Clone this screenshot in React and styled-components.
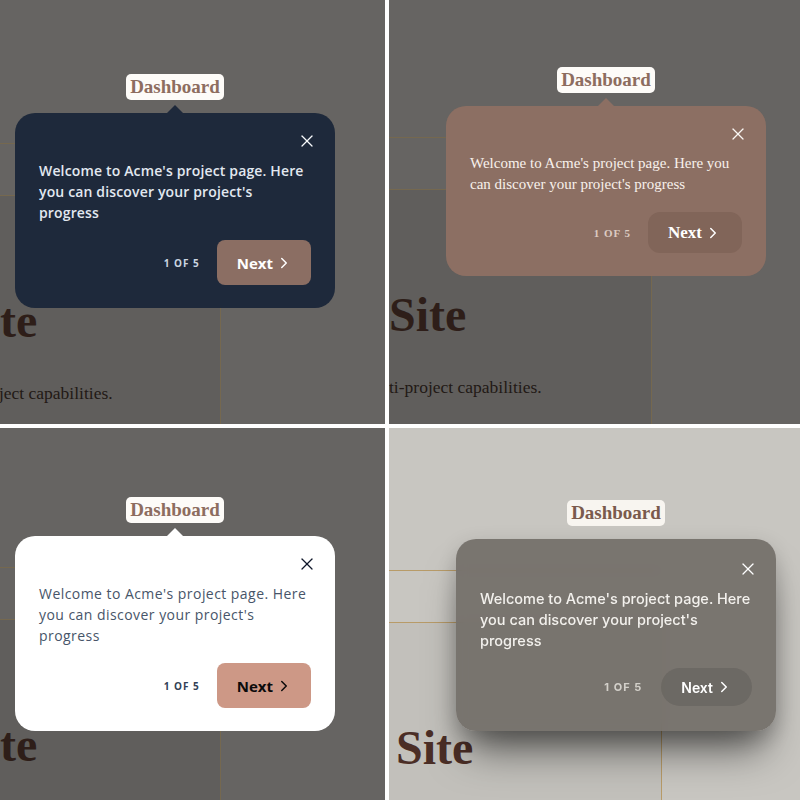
import React from 'react'
import styled, { createGlobalStyle } from 'styled-components'
import { X, ChevronRight } from 'lucide-react'

const GlobalStyle = createGlobalStyle`
  html, body {
    margin: 0;
    padding: 0;
    background: #ffffff;
  }
  body {
    width: 800px;
    height: 800px;
    overflow: hidden;
  }
`

const SERIF = "'Liberation Serif', 'DejaVu Serif', serif"
const GEO = "'Open Sans', 'Noto Sans', sans-serif"
const INTER = "Inter, 'Noto Sans', sans-serif"

// each quadrant is the same product tour step with a different skin
const variants = [
	{
		id: 'slate',
		page: { bg: '#666462', top: 143, w: 220, shift: 40, line: '#75684f', tint: '#605e5c', head: '#2e1e19', text: '#221915' },
		spot: { left: 15, top: 74 },
		label: { bg: '#fdfbf8', color: '#8d6d5f' },
		tour: {
			bg: '#1e293b', font: GEO, weight: 600, size: 14, track: 0.15, text: '#e2e8f0', close: '#f8fafc',
			count: '#cbd5e1', countSize: 10, countGap: 17,
			btnBg: '#8b6e63', btnText: '#ffffff', btnH: 45, btnR: 8, btnSize: 15, btnWeight: 700,
			btnPad: '0 18px 0 20px', pad: '18px 24px 23px', caret: true, gap: 0, shadow: 'none',
		},
	},
	{
		id: 'clay',
		page: { bg: '#666462', top: 137, w: 262, shift: 0, line: '#75684f', tint: '#605e5c', head: '#2e1e19', text: '#221915' },
		spot: { left: 57, top: 67 },
		label: { bg: '#fdfbf8', color: '#8d6d5f' },
		tour: {
			bg: '#8c6f63', font: SERIF, weight: 400, size: 15, track: 0, text: '#f8f1ec', close: '#fbf7f4',
			count: '#dccbc2', countSize: 11, countGap: 17,
			btnBg: '#816559', btnText: '#ffffff', btnH: 41, btnR: 12, btnSize: 17, btnWeight: 700,
			btnPad: '0 20px 0 20px', pad: '18px 24px 23px', caret: true, gap: 0, shadow: 'none',
		},
	},
	{
		id: 'light',
		page: { bg: '#666462', top: 139, w: 220, shift: 40, line: '#75684f', tint: '#605e5c', head: '#2e1e19', text: '#221915' },
		spot: { left: 15, top: 69 },
		label: { bg: '#fdfbf8', color: '#8d6d5f' },
		tour: {
			bg: '#ffffff', font: GEO, weight: 400, size: 14, track: 0.45, text: '#475569', close: '#0f172a',
			count: '#334155', countSize: 10, countGap: 17,
			btnBg: '#cd9886', btnText: '#0b0b0b', btnH: 45, btnR: 8, btnSize: 15, btnWeight: 700,
			btnPad: '0 18px 0 20px', pad: '18px 24px 23px', caret: true, gap: 0, shadow: 'none',
		},
	},
	{
		id: 'glass',
		page: { bg: '#c8c6c1', top: 142, w: 272, shift: -7, line: '#b89b68', tint: '#c2c0bb', head: '#4b2e26', text: '#3a2a24' },
		spot: { left: 67, top: 72 },
		label: { bg: '#f8f5f0', color: '#7a5a4d' },
		tour: {
			bg: 'rgba(112, 108, 102, 0.9)', font: INTER, weight: 500, size: 14.5, track: 0, text: '#f3f1ed', close: '#ffffff',
			count: '#d3d0ca', countSize: 11, countGap: 19,
			btnBg: 'rgba(100, 97, 92, 0.6)', btnText: '#ffffff', btnH: 38, btnR: 19, btnSize: 14, btnWeight: 600,
			btnPad: '0 19px 0 20px', pad: '20px 24px 25px', caret: false, gap: 13,
			shadow: '0 30px 40px -12px rgba(0,0,0,0.55), 0 8px 22px rgba(0,0,0,0.2)',
		},
	},
]

const App = () =>
{
	return (
		<>
		<GlobalStyle/>
		<Grid>
			{variants.map(v => (
				<Panel key={v.id} $bg={v.page.bg}>
					<Page $top={v.page.top}>
						<Band $w={v.page.w} $line={v.page.line}/>
						<Card $w={v.page.w} $line={v.page.line} $tint={v.page.tint}>
							<CardContent $shift={v.page.shift}>
								<Heading $color={v.page.head}>Site</Heading>
								<Lead $color={v.page.text}>ti-project capabilities.</Lead>
							</CardContent>
						</Card>
					</Page>
					<Spotlight $left={v.spot.left} $top={v.spot.top}>
						<TargetLabel $bg={v.label.bg} $color={v.label.color}>Dashboard</TargetLabel>
						{v.tour.caret && <Caret $color={v.tour.bg}/>}
						<TourStep t={v.tour}/>
					</Spotlight>
				</Panel>
			))}
		</Grid>
		</>
	)
}

const TourStep = ({t}) =>
{
	return (
		<Tour $t={t}>
			<TourHeader>
				<CloseButton $color={t.close} aria-label="Close">
					<X size={20} strokeWidth={1.5}/>
				</CloseButton>
			</TourHeader>
			<Message $t={t}>
				Welcome to Acme's project page. Here you can discover your project's progress
			</Message>
			<Footer $gap={t.countGap}>
				<Counter $t={t}>1 OF 5</Counter>
				<NextButton $t={t}>
					Next
					<ChevronRight size={18} strokeWidth={2}/>
				</NextButton>
			</Footer>
		</Tour>
	)
}

const Grid = styled.div`
	display: grid;
	grid-template-columns: 385px 411px;
	grid-template-rows: 424px 372px;
	gap: 4px;
	width: 800px;
	height: 800px;
	background: #ffffff;
`

const Panel = styled.div`
	position: relative;
	overflow: hidden;
	background: ${p => p.$bg};
`

const Page = styled.div`
	display: flex;
	flex-direction: column;
	padding-top: ${p => p.$top}px;
`

const Band = styled.div`
	width: ${p => p.$w}px;
	height: 51px;
	border-top: 1px solid ${p => p.$line};
	border-bottom: 1px solid ${p => p.$line};
`

const Card = styled.div`
	width: ${p => p.$w}px;
	height: 700px;
	padding-top: 101px;
	border-right: 1px solid ${p => p.$line};
	background: ${p => p.$tint};
`

const CardContent = styled.div`
	margin-left: ${p => -p.$shift}px;
	white-space: nowrap;
`

const Heading = styled.h1`
	margin: 0;
	font-family: ${SERIF};
	font-weight: 700;
	font-size: 48px;
	line-height: 48px;
	color: ${p => p.$color};
`

const Lead = styled.p`
	margin: 36px 0 0;
	font-family: ${SERIF};
	font-size: 17.5px;
	line-height: 24px;
	color: ${p => p.$color};
`

const Spotlight = styled.div`
	position: absolute;
	left: ${p => p.$left}px;
	top: ${p => p.$top}px;
	width: 320px;
	display: flex;
	flex-direction: column;
	align-items: center;
`

const TargetLabel = styled.div`
	padding: 0 4px;
	border-radius: 5px;
	background: ${p => p.$bg};
	color: ${p => p.$color};
	font-family: ${SERIF};
	font-weight: 700;
	font-size: 19px;
	line-height: 26px;
`

const Caret = styled.div`
	width: 0;
	height: 0;
	margin-top: 5px;
	border-left: 8px solid transparent;
	border-right: 8px solid transparent;
	border-bottom: 8px solid ${p => p.$color};
`

const Tour = styled.div`
	align-self: stretch;
	box-sizing: border-box;
	margin-top: ${p => p.$t.gap}px;
	padding: ${p => p.$t.pad};
	border-radius: 20px;
	background: ${p => p.$t.bg};
	box-shadow: ${p => p.$t.shadow};
	backdrop-filter: blur(6px);
	font-family: ${p => p.$t.font};
`

const TourHeader = styled.div`
	display: flex;
	justify-content: flex-end;
	height: 20px;
`

const CloseButton = styled.button`
	display: flex;
	align-items: center;
	justify-content: center;
	width: 20px;
	height: 20px;
	margin-right: -6px;
	padding: 0;
	border: none;
	background: none;
	color: ${p => p.$color};
	cursor: pointer;
`

const Message = styled.p`
	margin: 9px 0 0;
	font-size: ${p => p.$t.size}px;
	font-weight: ${p => p.$t.weight};
	letter-spacing: ${p => p.$t.track}px;
	line-height: 21px;
	color: ${p => p.$t.text};
`

const Footer = styled.div`
	display: flex;
	justify-content: flex-end;
	align-items: center;
	gap: ${p => p.$gap}px;
	margin-top: 17px;
`

const Counter = styled.span`
	font-size: ${p => p.$t.countSize}px;
	font-weight: 700;
	letter-spacing: 1px;
	color: ${p => p.$t.count};
`

const NextButton = styled.button`
	display: flex;
	align-items: center;
	gap: 2px;
	height: ${p => p.$t.btnH}px;
	padding: ${p => p.$t.btnPad};
	border: none;
	border-radius: ${p => p.$t.btnR}px;
	background: ${p => p.$t.btnBg};
	color: ${p => p.$t.btnText};
	font-family: inherit;
	font-size: ${p => p.$t.btnSize}px;
	font-weight: ${p => p.$t.btnWeight};
	cursor: pointer;
`

export default App
